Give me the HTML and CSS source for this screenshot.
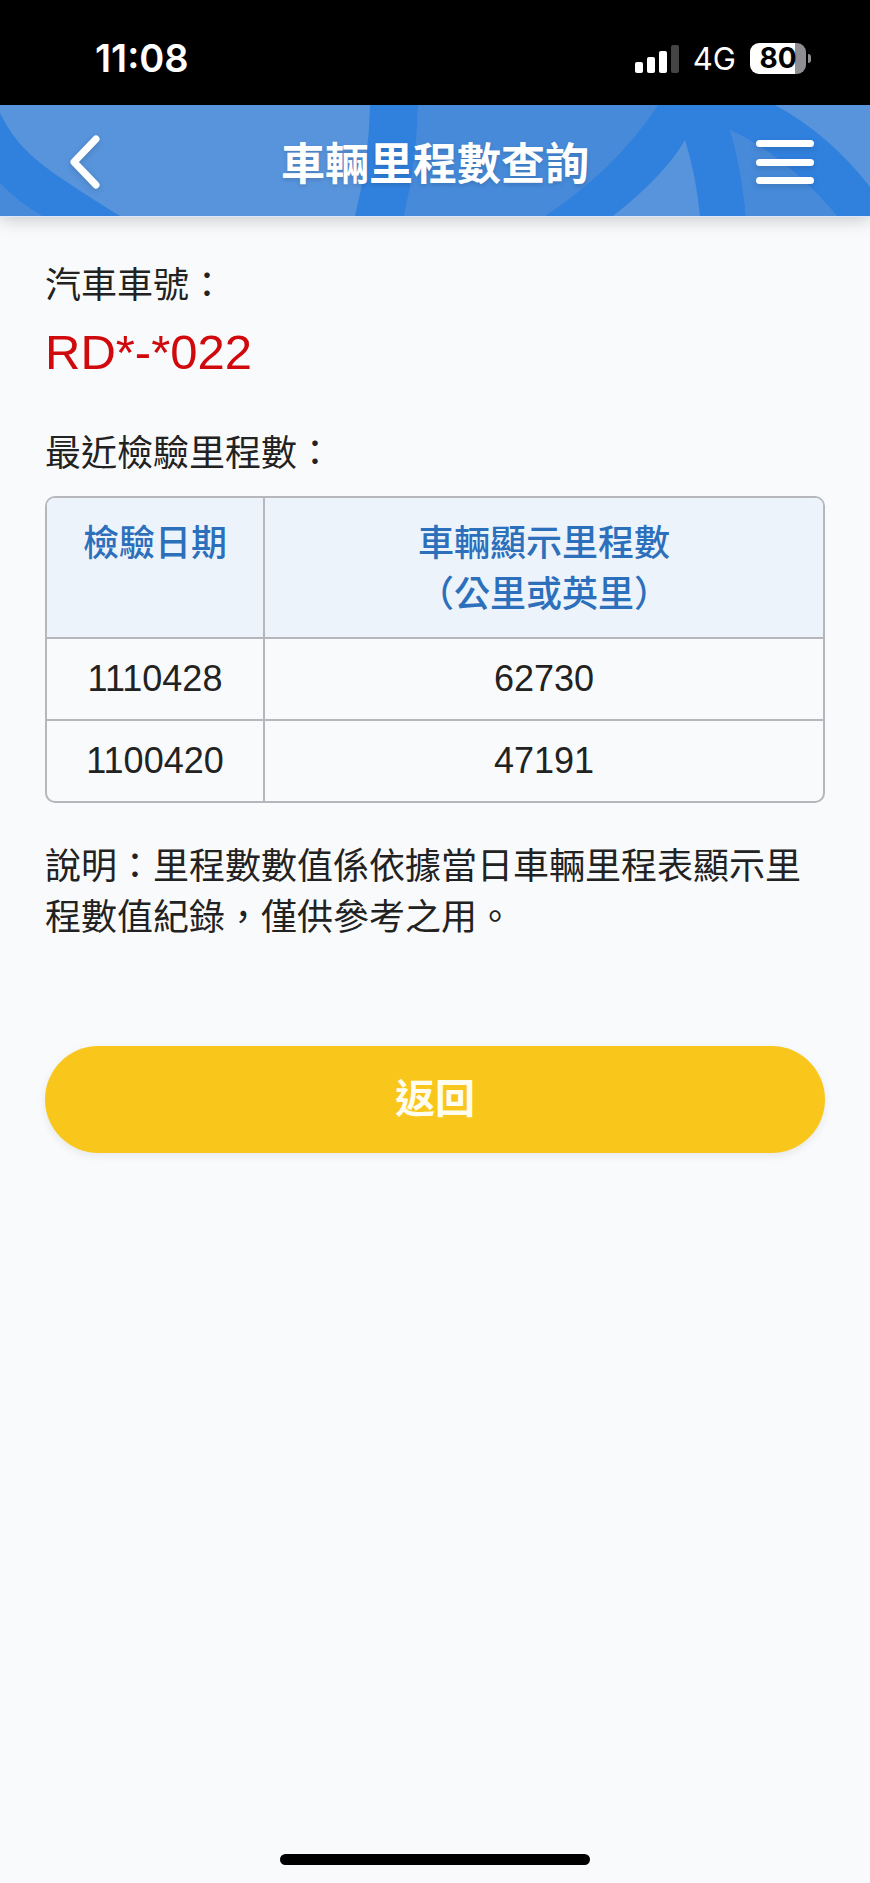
FILE: index.html
```html
<!DOCTYPE html>
<html lang="zh-Hant">
<head>
    <meta charset="UTF-8">
    <meta name="viewport" content="width=device-width, initial-scale=1.0">
    <title>車輛里程數查詢</title>
    <link rel="stylesheet" href="styles.css">
</head>
<body>
    <div class="status">
        <span class="time">11:08</span>
        <div class="status-right">
            <svg class="signal" width="44" height="28" viewBox="0 0 44 28">
                <rect x="0" y="17" width="8" height="11" rx="2" fill="#fff"/>
                <rect x="12" y="12" width="8" height="16" rx="2" fill="#fff"/>
                <rect x="24" y="6" width="8" height="22" rx="2" fill="#fff"/>
                <rect x="36" y="0" width="8" height="28" rx="2" fill="#444"/>
            </svg>
            <span class="net">4G</span>
            <div class="battery"><span class="level">80</span></div>
        </div>
    </div>
    <header class="header">
        <svg class="header-bg" viewBox="0 0 870 111" preserveAspectRatio="none" aria-hidden="true">
            <rect width="870" height="111" fill="#5894dc"/>
            <path d="M0 78Q18 97 42 111H0Z" fill="#468ad9"/>
            <path d="M0 8C20 48 42 62 120 111H42Q18 97 0 78Z" fill="#3080de"/>
            <path d="M418 0H658Q616 64 545 111H404Q417 55 418 0Z" fill="#468ad9"/>
            <path d="M370 0H418Q417 55 404 111H355Q369 55 370 0Z" fill="#3080de"/>
            <path d="M658 0H775Q830 30 870 82V111H837Q785 50 730 25Q741 60 746 111H700Q696 70 685 35Q665 70 613 111H545Q616 64 658 0Z" fill="#3080de"/>
            <path d="M730 25Q785 50 837 111H746Q741 60 730 25Z" fill="#468ad9"/>
        </svg>
        <button class="icon-btn" type="button" aria-label="上一頁">
            <svg width="30" height="54" viewBox="0 0 30 54" fill="none" stroke="#fff" stroke-width="7" stroke-linecap="round" stroke-linejoin="round">
                <path d="M26 4L4 27L26 50"/>
            </svg>
        </button>
        <h1 class="title">車輛里程數查詢</h1>
        <button class="icon-btn" type="button" aria-label="選單">
            <svg width="58" height="46" viewBox="0 0 58 46" fill="#fff">
                <rect y="1" width="58" height="7" rx="3.5"/>
                <rect y="20" width="58" height="7" rx="3.5"/>
                <rect y="38" width="58" height="7" rx="3.5"/>
            </svg>
        </button>
    </header>
    <main class="main">
        <p class="label">汽車車號：</p>
        <p class="plate">RD*-*022</p>
        <p class="label">最近檢驗里程數：</p>
        <table class="list">
            <thead>
                <tr>
                    <th class="date">檢驗日期</th>
                    <th>車輛顯示里程數<br>（公里或英里）</th>
                </tr>
            </thead>
            <tbody>
                <tr><td>1110428</td><td>62730</td></tr>
                <tr><td>1100420</td><td>47191</td></tr>
            </tbody>
        </table>
        <p class="note">說明：里程數數值係依據當日車輛里程表顯示里程數值紀錄，僅供參考之用。</p>
        <button class="back" type="button">返回</button>
    </main>
    <div class="home-bar"></div>
</body>
</html>
```
FILE: styles.css
```css
*{
    margin:0;
    padding:0;
    box-sizing: border-box;
}
body{
    min-height: 100vh;
    display: flex;
    flex-direction: column;
    background: #f9fafc;
    color: #222;
    font-family: "Liberation Sans", "Noto Sans CJK TC", sans-serif;
    font-size: 36px;
    line-height: 51px;
}
button{
    border: 0;
    font-family: inherit;
    cursor: pointer;
}
/* 狀態列 */
.status{
    height: 105px;
    padding: 12px 59px 0 95px;
    display: flex;
    align-items: center;
    justify-content: space-between;
    background: #000;
    color: #fff;
    font-family: Inter, sans-serif;
}
.time{
    font-size: 38px;
    font-weight: 600;
}
.status-right{
    display: flex;
    align-items: center;
    gap: 14px;
}
.net{
    font-size: 31px;
}
.battery{
    display: flex;
    align-items: center;
}
.battery::after{
    content: "";
    width: 3px;
    height: 9px;
    margin-left: 2px;
    border-radius: 0 4px 4px 0;
    background: #8e8e93;
}
.level{
    width: 56px;
    border-radius: 9px;
    background: linear-gradient(90deg, #fff 80%, #8e8e93 80%);
    color: #000;
    font-size: 28px;
    font-weight: 700;
    line-height: 31px;
    text-align: center;
}
/* 標題列 */
.header{
    position: relative;
    height: 112px;
    padding: 2px 56px 0;
    display: flex;
    align-items: center;
    justify-content: space-between;
    border-bottom: 1px solid #dbe9fb;
    box-shadow: 0 3px 16px rgba(0,0,0,.2);
}
.header-bg{
    position: absolute;
    top: 0;
    left: 0;
    width: 100%;
    height: 100%;
}
.icon-btn{
    position: relative;
    width: 58px;
    display: flex;
    justify-content: center;
    background: none;
    filter: drop-shadow(0 2px 3px rgba(0,0,0,.15));
}
.title{
    position: relative;
    flex: 1;
    text-align: center;
    color: #fff;
    font-family: "Noto Sans CJK TC", sans-serif;
    font-size: 44px;
    font-weight: 700;
    text-shadow: 0 2px 4px rgba(0,0,0,.15);
}
/* 內容 */
.main{
    flex: 1;
    padding: 43px 45px;
}
.plate{
    margin: 6px 0 41px;
    color: #d0090d;
    font-size: 49px;
    line-height: 70px;
}
.list{
    width: 100%;
    margin: 17px 0 38px;
    table-layout: fixed;
    border: 2px solid #b6b7bc;
    border-radius: 10px;
    border-spacing: 0;
    overflow: hidden;
    text-align: center;
}
.list th{
    padding: 20px 0 17px;
    border-bottom: 2px solid #b6b7bc;
    background: #ecf3fb;
    color: #2c6fbb;
    font-weight: 500;
    vertical-align: top;
}
.list .date{
    width: 218px;
}
.list td{
    padding: 14px 0 15px;
    border-bottom: 2px solid #b6b7bc;
}
.list th:first-child,
.list td:first-child{
    border-right: 2px solid #b6b7bc;
}
.list tr:last-child td{
    border-bottom: 0;
}
.back{
    display: block;
    width: 100%;
    height: 107px;
    margin-top: 103px;
    border-radius: 54px;
    background: #f9c71c;
    color: #fffdf0;
    font-size: 40px;
    font-weight: 700;
    line-height: 51px;
    box-shadow: 0 3px 8px rgba(0,0,0,.08);
}
.home-bar{
    width: 310px;
    height: 11px;
    margin: 0 auto 18px;
    border-radius: 6px;
    background: #000;
}
```
